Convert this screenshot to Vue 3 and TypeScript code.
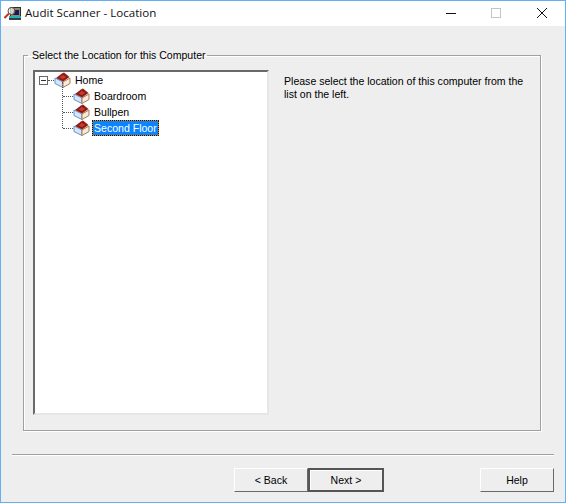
<script setup lang="ts">
interface Place { name: string; selected?: boolean }
const places: Place[] = [
  { name: 'Boardroom' },
  { name: 'Bullpen' },
  { name: 'Second Floor', selected: true },
]
</script>

<template>
  <div class="window">
    <header class="titlebar">
      <svg class="app-icon" width="18" height="18" viewBox="0 0 18 18">
        <path d="M0.5 13 L5 8.5" stroke="#c83020" stroke-width="2" />
        <rect x="6.5" y="2.5" width="10" height="9" fill="#8c8c70" stroke="#303028" />
        <rect x="9" y="5" width="6" height="5" fill="#181860" />
        <circle cx="7.5" cy="6" r="3.5" fill="#e8eef0" fill-opacity="0.75" stroke="#6a4a38" />
        <rect x="5" y="11" width="12" height="2" fill="#20b0b8" />
        <rect x="5" y="13" width="12" height="2" fill="#384038" />
      </svg>
      <span class="title">Audit Scanner - Location</span>
      <div class="controls">
        <svg class="ctl" width="46" height="25" viewBox="0 0 46 25"><path d="M19 12.5 h10" stroke="#111" stroke-width="1" /></svg>
        <svg class="ctl" width="46" height="25" viewBox="0 0 46 25"><rect x="18.5" y="7.5" width="9" height="9" fill="none" stroke="#c4c4c4" stroke-width="1" /></svg>
        <svg class="ctl" width="46" height="25" viewBox="0 0 46 25"><path d="M18 7 L28 17 M28 7 L18 17" stroke="#111" stroke-width="1" /></svg>
      </div>
    </header>

    <main class="body">
      <fieldset class="group">
        <legend class="legend">Select the Location for this Computer</legend>
        <div class="group-inner">
          <div class="tree">
            <div class="row root">
              <span class="expander"></span>
              <span class="dots-h short"></span>
              <svg class="house" width="17" height="16" viewBox="0 0 17 16">
                <path d="M1 6 L9 10 L9 15.5 L1 11.5 Z" fill="#d6e6f8" stroke="#5f93d0" stroke-width="1" />
                <path d="M9 10 L16 6 L16 11.5 L9 15.5 Z" fill="#f8ead8" stroke="#a87a55" stroke-width="1" />
                <path d="M2 6 L8 1.5 L10 0.5 L15.5 5 L9 9.5 Z" fill="#8f1c12" />
                <path d="M5.5 5.5 L9 3 L12 5 L9 7 Z" fill="#c83c2e" />
              </svg>
              <span class="label">Home</span>
            </div>
            <div class="children">
              <div v-for="p in places" :key="p.name" class="row child">
                <span class="dots-h long"></span>
                <svg class="house" width="17" height="16" viewBox="0 0 17 16">
                  <path d="M1 6 L9 10 L9 15.5 L1 11.5 Z" fill="#d6e6f8" stroke="#5f93d0" stroke-width="1" />
                  <path d="M9 10 L16 6 L16 11.5 L9 15.5 Z" fill="#f8ead8" stroke="#a87a55" stroke-width="1" />
                  <path d="M2 6 L8 1.5 L10 0.5 L15.5 5 L9 9.5 Z" fill="#8f1c12" />
                  <path d="M5.5 5.5 L9 3 L12 5 L9 7 Z" fill="#c83c2e" />
                </svg>
                <span class="label" :class="{ selected: p.selected }">{{ p.name }}</span>
              </div>
            </div>
          </div>
          <p class="help-text">Please select the location of this computer from the list on the left.</p>
        </div>
      </fieldset>

      <div class="separator"></div>

      <footer class="actions">
        <button class="btn back">&lt; Back</button>
        <button class="btn default">Next &gt;</button>
        <button class="btn help">Help</button>
      </footer>
    </main>
  </div>
</template>

<style>
html, body { margin: 0; padding: 0; background: #eeeeee; }
</style>

<style scoped>
.window {
  width: 566px;
  height: 503px;
  box-sizing: border-box;
  border: 1px solid #64b0f4;
  background: #eeeeee;
  display: flex;
  flex-direction: column;
  font-family: "Liberation Sans", Arial, sans-serif;
  font-size: 10.55px;
  color: #000;
  overflow: hidden;
}
.titlebar {
  height: 25px;
  background: #fff;
  display: flex;
  align-items: center;
  flex: none;
}
.app-icon { margin-left: 3px; flex: none; }
.title {
  margin-left: 3px;
  margin-bottom: 2px;
  font-family: "Open Sans", sans-serif;
  font-size: 11.6px;
  color: #111;
}
.controls { margin-left: auto; display: flex; }
.ctl { display: block; }
.body {
  flex: 1;
  display: flex;
  flex-direction: column;
  padding: 22px 11px 9px;
  min-height: 0;
}
.group {
  margin: 0 13px 0 11px;
  padding: 0;
  height: 383px;
  box-sizing: border-box;
  border: 1px solid #a0a0a0;
  box-shadow: 1px 1px 0 #fff, inset 1px 1px 0 #fff;
  min-width: 0;
}
.legend {
  margin-left: 4px;
  padding: 0 1px 0 4px;
  line-height: 14px;
}
.group-inner {
  display: flex;
  padding: 8px 0 0 9px;
}
.tree {
  width: 236px;
  height: 345px;
  box-sizing: border-box;
  background: #fff;
  border: 2px solid;
  border-color: #696969 #e6e6e6 #e6e6e6 #696969;
  padding: 0 0 0 4px;
  flex: none;
}
.row {
  height: 16px;
  display: flex;
  align-items: center;
  line-height: 14px;
}
.expander {
  width: 9px;
  height: 9px;
  box-sizing: border-box;
  border: 1px solid #696969;
  background: linear-gradient(#333, #333) center / 5px 1px no-repeat #fff;
  flex: none;
}
.dots-h {
  height: 0;
  border-top: 1px dotted #555;
  flex: none;
}
.short { width: 6px; }
.long { width: 10px; }
.house { display: block; flex: none; }
.label {
  margin-left: 2px;
  padding: 0 2px;
  height: 16px;
  line-height: 16px;
  box-sizing: border-box;
  white-space: nowrap;
}
.children {
  position: relative;
  margin-left: 23px;
  padding-left: 1px;
}
.children::before {
  content: "";
  position: absolute;
  left: 0;
  top: -6px;
  height: 46px;
  border-left: 1px dotted #555;
}
.selected {
  padding: 0 1px;
  line-height: 14px;
  color: #fff;
  border: 1px dotted #111;
  background: linear-gradient(#0a84ff, #0a84ff) padding-box, #f08a10 border-box;
}
.help-text {
  margin: 0 0 0 15px;
  width: 250px;
  line-height: 13px;
  padding-top: 5px;
}
.separator {
  margin-top: 23px;
  height: 1px;
  background: #a0a0a0;
  box-shadow: 0 1px 0 #fff;
  flex: none;
}
.actions {
  display: flex;
  margin-top: 13px;
  padding-left: 222px;
}
.btn {
  width: 74px;
  height: 24px;
  padding: 0;
  box-sizing: border-box;
  background: #eeeeee;
  border: 1px solid;
  border-color: #fff #696969 #696969 #fff;
  font: inherit;
  color: #000;
}
.default {
  width: 76px;
  border: 2px solid #555;
  box-shadow: inset 1px 1px 0 #fff;
}
.help { margin-left: auto; }
</style>
